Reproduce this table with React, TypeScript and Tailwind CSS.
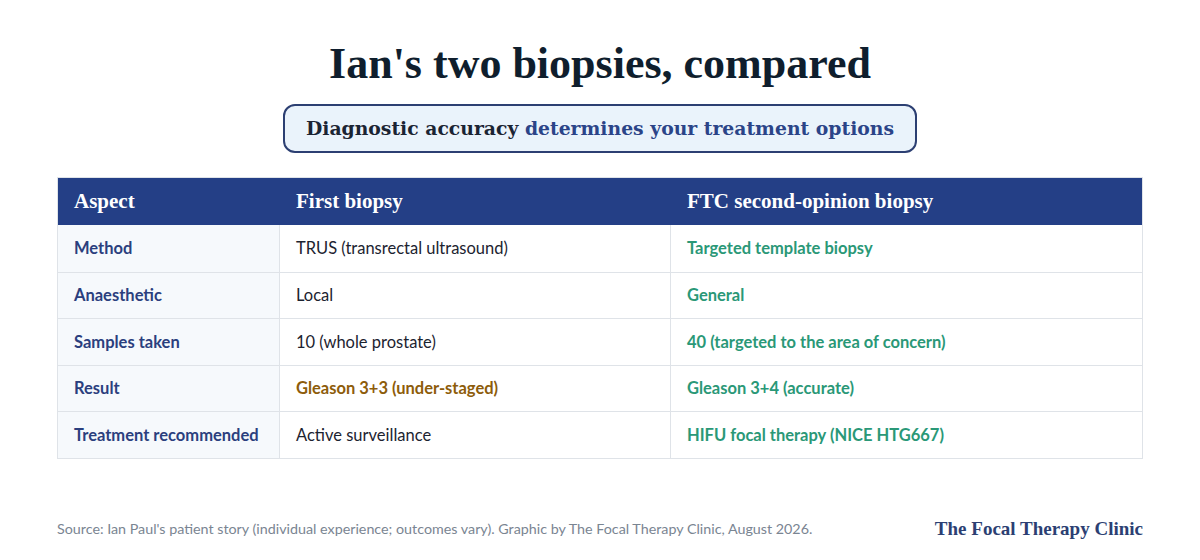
const rows = [
  { aspect: "Method", first: "TRUS (transrectal ultrasound)", firstTone: "plain", second: "Targeted template biopsy" },
  { aspect: "Anaesthetic", first: "Local", firstTone: "plain", second: "General" },
  { aspect: "Samples taken", first: "10 (whole prostate)", firstTone: "plain", second: "40 (targeted to the area of concern)" },
  { aspect: "Result", first: "Gleason 3+3 (under-staged)", firstTone: "warn", second: "Gleason 3+4 (accurate)" },
  { aspect: "Treatment recommended", first: "Active surveillance", firstTone: "plain", second: "HIFU focal therapy (NICE HTG667)" },
];

const serif = "font-['DejaVu_Serif','Liberation_Serif',serif]";
const times = "font-['Liberation_Serif','DejaVu_Serif',serif]";
const sans = "font-['Lato','Open_Sans',sans-serif]";

export default function App() {
  return (
    <div className={`w-[1200px] h-[560px] bg-white flex flex-col items-center ${sans}`}>
      {/* Title */}
      <h1 className={`${times} mt-[38px] text-[44px] leading-[52px] font-bold text-[#0f1e2d]`}>
        Ian's two biopsies, compared
      </h1>

      {/* Pill */}
      <div className={`${serif} mt-[14px] w-[634px] h-[49px] rounded-[12px] border-2 border-[#2c3f72] bg-[#eaf3fb] flex items-center justify-center text-[18.8px] font-bold`}>
        <span className="text-[#1b2433]">Diagnostic accuracy&nbsp;</span>
        <span className="text-[#2b4488]">determines your treatment options</span>
      </div>

      {/* Table */}
      <div className="mt-[24px] w-[1086px] border border-[#dfe3e8]">
        <div className={`${times} grid grid-cols-[222px_391px_1fr] h-[47px] bg-[#243f86] text-white text-[21px] font-bold`}>
          <div className="pl-[16px] flex items-center">Aspect</div>
          <div className="pl-[16px] flex items-center">First biopsy</div>
          <div className="pl-[16px] flex items-center">FTC second-opinion biopsy</div>
        </div>
        {rows.map((r, i) => (
          <div
            key={r.aspect}
            className={`grid grid-cols-[222px_391px_1fr] h-[46.6px] text-[16.5px] ${i > 0 ? "border-t border-[#dfe3e8]" : ""}`}
          >
            <div className="pl-[16px] flex items-center bg-[#f6f9fc] border-r border-[#dfe3e8] font-bold text-[#2b3f7e]">
              {r.aspect}
            </div>
            <div
              className={`pl-[16px] flex items-center border-r border-[#dfe3e8] ${
                r.firstTone === "warn" ? "font-bold text-[#8d5c0a]" : "text-[#1c2330]"
              }`}
            >
              {r.first}
            </div>
            <div className="pl-[16px] flex items-center font-bold text-[#2a9877]">{r.second}</div>
          </div>
        ))}
      </div>

      {/* Footer */}
      <div className="mt-auto mb-[17px] w-[1086px] flex items-center justify-between">
        <p className="text-[14.3px] text-[#7a8592]">
          Source: Ian Paul's patient story (individual experience; outcomes vary). Graphic by The Focal Therapy Clinic, August 2026.
        </p>
        <p className={`${times} text-[19px] font-bold text-[#2c3f73]`}>The Focal Therapy Clinic</p>
      </div>
    </div>
  );
}
